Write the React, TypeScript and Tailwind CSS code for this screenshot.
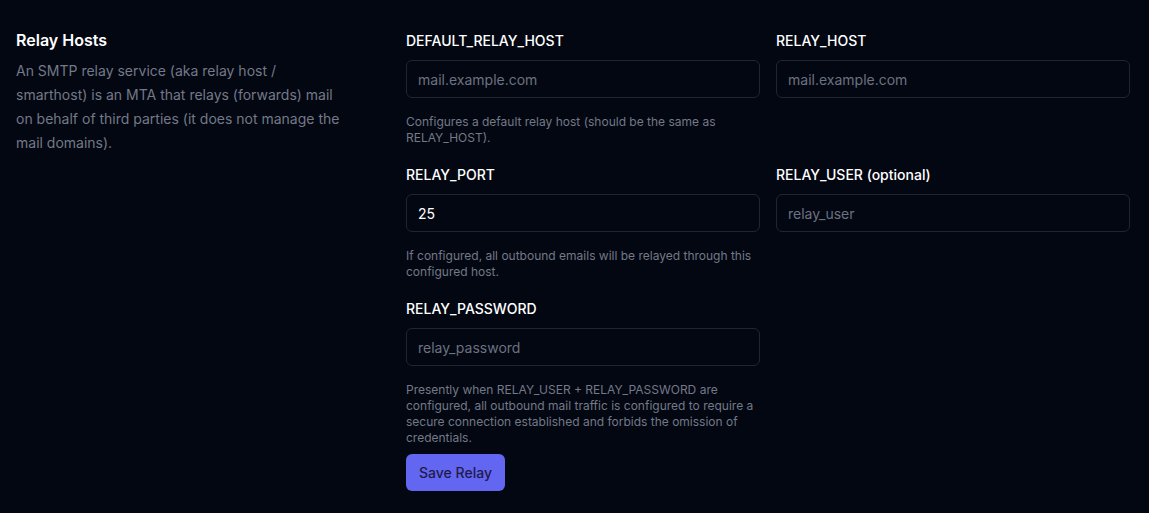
import type { ReactNode } from 'react';

function Field(props: { label: string; placeholder?: string; value?: string; help?: ReactNode; type?: string }) {
  const { label, placeholder, value, help, type = 'text' } = props;
  return (
    <div className="flex flex-col">
      <label className="text-sm font-medium leading-5 text-white">{label}</label>
      <input
        type={type}
        placeholder={placeholder}
        defaultValue={value}
        className="mt-[9px] h-[38px] w-full rounded-md border border-[#1f2531] bg-[#030712] px-[11px] text-sm text-white placeholder:text-[#6b7280] outline-none"
      />
      {help ? <p className="mt-4 text-xs leading-4 text-[#737987]">{help}</p> : null}
    </div>
  );
}

export default function App() {
  return (
    <div
      className="min-h-[513px] bg-[#030712] text-white"
      style={{ fontFamily: 'Inter, "Noto Sans", sans-serif' }}
    >
      <div className="flex pl-4 pr-[19px] pt-[30px] pb-4">
        <div className="w-[390px] shrink-0 pr-[62px]">
          <h2 className="text-base font-semibold leading-5 text-white">Relay Hosts</h2>
          <p className="mt-[9px] text-sm leading-6 text-[#737987]">
            An SMTP relay service (aka relay host / smarthost) is an MTA that relays (forwards) mail on behalf of third
            parties (it does not manage the mail domains).
          </p>
        </div>
        <div className="flex-1 pt-px">
          <div className="grid grid-cols-2 gap-x-4 gap-y-[19px]">
            <Field
              label="DEFAULT_RELAY_HOST"
              placeholder="mail.example.com"
              help="Configures a default relay host (should be the same as RELAY_HOST)."
            />
            <Field label="RELAY_HOST" placeholder="mail.example.com" />
            <Field
              label="RELAY_PORT"
              value="25"
              help="If configured, all outbound emails will be relayed through this configured host."
            />
            <Field label="RELAY_USER (optional)" placeholder="relay_user" />
            <Field
              label="RELAY_PASSWORD"
              type="password"
              placeholder="relay_password"
              help="Presently when RELAY_USER + RELAY_PASSWORD are configured, all outbound mail traffic is configured to require a secure connection established and forbids the omission of credentials."
            />
          </div>
          <button className="mt-[8px] h-[37px] w-[99px] rounded-md bg-[#6366f1] text-sm font-medium text-[#1e1b4b]">
            Save Relay
          </button>
        </div>
      </div>
    </div>
  );
}
